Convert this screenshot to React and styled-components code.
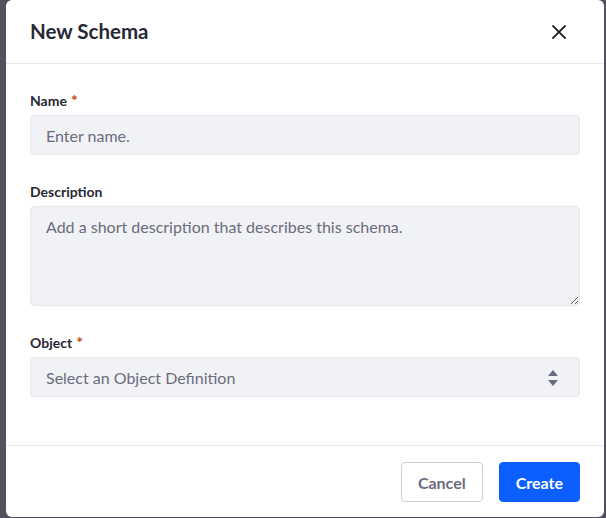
import React from 'react';
import styled, { createGlobalStyle } from 'styled-components';

const GlobalStyle = createGlobalStyle`
  html, body {
    margin: 0;
    padding: 0;
    background: #52515e;
    font-family: Lato, "Noto Sans", sans-serif;
  }
  * { box-sizing: border-box; }
`;

const Backdrop = styled.div`
  display: flex;
  height: 518px;
  padding: 0 2px 1px 6px;
  overflow: hidden;
`;

const Modal = styled.div`
  flex: 1;
  display: flex;
  flex-direction: column;
  background: #fff;
  border-radius: 6px;
  color: #272833;
  overflow: hidden;
`;

const Header = styled.div`
  flex-shrink: 0;
  display: flex;
  align-items: center;
  justify-content: space-between;
  height: 64px;
  padding: 0 24px;
  border-bottom: 1px solid #e7e7ed;
`;

const Title = styled.h1`
  margin: 0;
  font-size: 20.5px;
  line-height: 1.2;
  font-weight: 700;
  color: #272833;
`;

const CloseButton = styled.button`
  display: flex;
  align-items: center;
  justify-content: center;
  width: 32px;
  height: 32px;
  margin-right: 5px;
  padding: 0;
  border: none;
  background: transparent;
  color: #272833;
  cursor: pointer;
`;

const Body = styled.div`
  flex-shrink: 0;
  padding: 24px 24px 24px;
  border-bottom: 1px solid #e7e7ed;
`;

const Group = styled.div`
  margin-bottom: 24px;
`;

const Label = styled.label`
  display: block;
  margin-bottom: 6px;
  padding-top: 3px;
  height: 21px;
  font-size: 14px;
  line-height: 20px;
  font-weight: 700;
  color: #272833;
`;

const Required = styled.span`
  margin-left: 4px;
  color: #b95000;
  font-size: 16px;
  line-height: 1;
  vertical-align: top;
  position: relative;
  top: 1px;
`;

const fieldStyles = `
  display: block;
  width: 100%;
  border: 1px solid #e7e7ed;
  border-radius: 4px;
  background: #f1f2f5;
  font-family: inherit;
  font-size: 16px;
  color: #272833;
  padding: 0 15px;
  outline: none;
  &::placeholder { color: #6b6c7e; opacity: 1; }
`;

const Input = styled.input`
  ${fieldStyles}
  height: 40px;
`;

const TextArea = styled.textarea`
  ${fieldStyles}
  height: 100px;
  padding-top: 8px;
  line-height: 1.5;
  resize: vertical;
`;

const SelectBox = styled.div`
  ${fieldStyles}
  position: relative;
  display: flex;
  align-items: center;
  height: 40px;
  color: #6b6c7e;
`;

const Caret = styled.svg`
  position: absolute;
  right: 21px;
  top: 12px;
`;

const Footer = styled.div`
  flex-shrink: 0;
  display: flex;
  justify-content: flex-end;
  gap: 16px;
  padding: 16px 24px;
`;

const Button = styled.button`
  height: 40px;
  padding: 0 16px;
  border-radius: 4px;
  font-family: inherit;
  font-size: 16px;
  font-weight: 700;
  cursor: pointer;
  border: 1px solid ${p => (p.$primary ? '#0b5fff' : '#cdced9')};
  background: ${p => (p.$primary ? '#0b5fff' : '#fff')};
  color: ${p => (p.$primary ? '#fff' : '#6b6c7e')};
`;

export default function App() {
  return (
    <>
      <GlobalStyle />
      <Backdrop>
        <Modal>
          <Header>
            <Title>New Schema</Title>
            <CloseButton aria-label="Close">
              <svg width="14" height="14" viewBox="0 0 14 14">
                <path d="M1 1L13 13M13 1L1 13" stroke="currentColor" strokeWidth="1.8" strokeLinecap="round" />
              </svg>
            </CloseButton>
          </Header>
          <Body>
            <Group>
              <Label>Name<Required>*</Required></Label>
              <Input placeholder="Enter name." />
            </Group>
            <Group>
              <Label>Description</Label>
              <TextArea placeholder="Add a short description that describes this schema." />
            </Group>
            <Group>
              <Label>Object<Required>*</Required></Label>
              <SelectBox>
                Select an Object Definition
                <Caret width="10" height="16" viewBox="0 0 10 16">
                  <path d="M5 0L10 6H0Z M0 10H10L5 16Z" fill="#6b6c7e" />
                </Caret>
              </SelectBox>
            </Group>
          </Body>
          <Footer>
            <Button>Cancel</Button>
            <Button $primary>Create</Button>
          </Footer>
        </Modal>
      </Backdrop>
    </>
  );
}
